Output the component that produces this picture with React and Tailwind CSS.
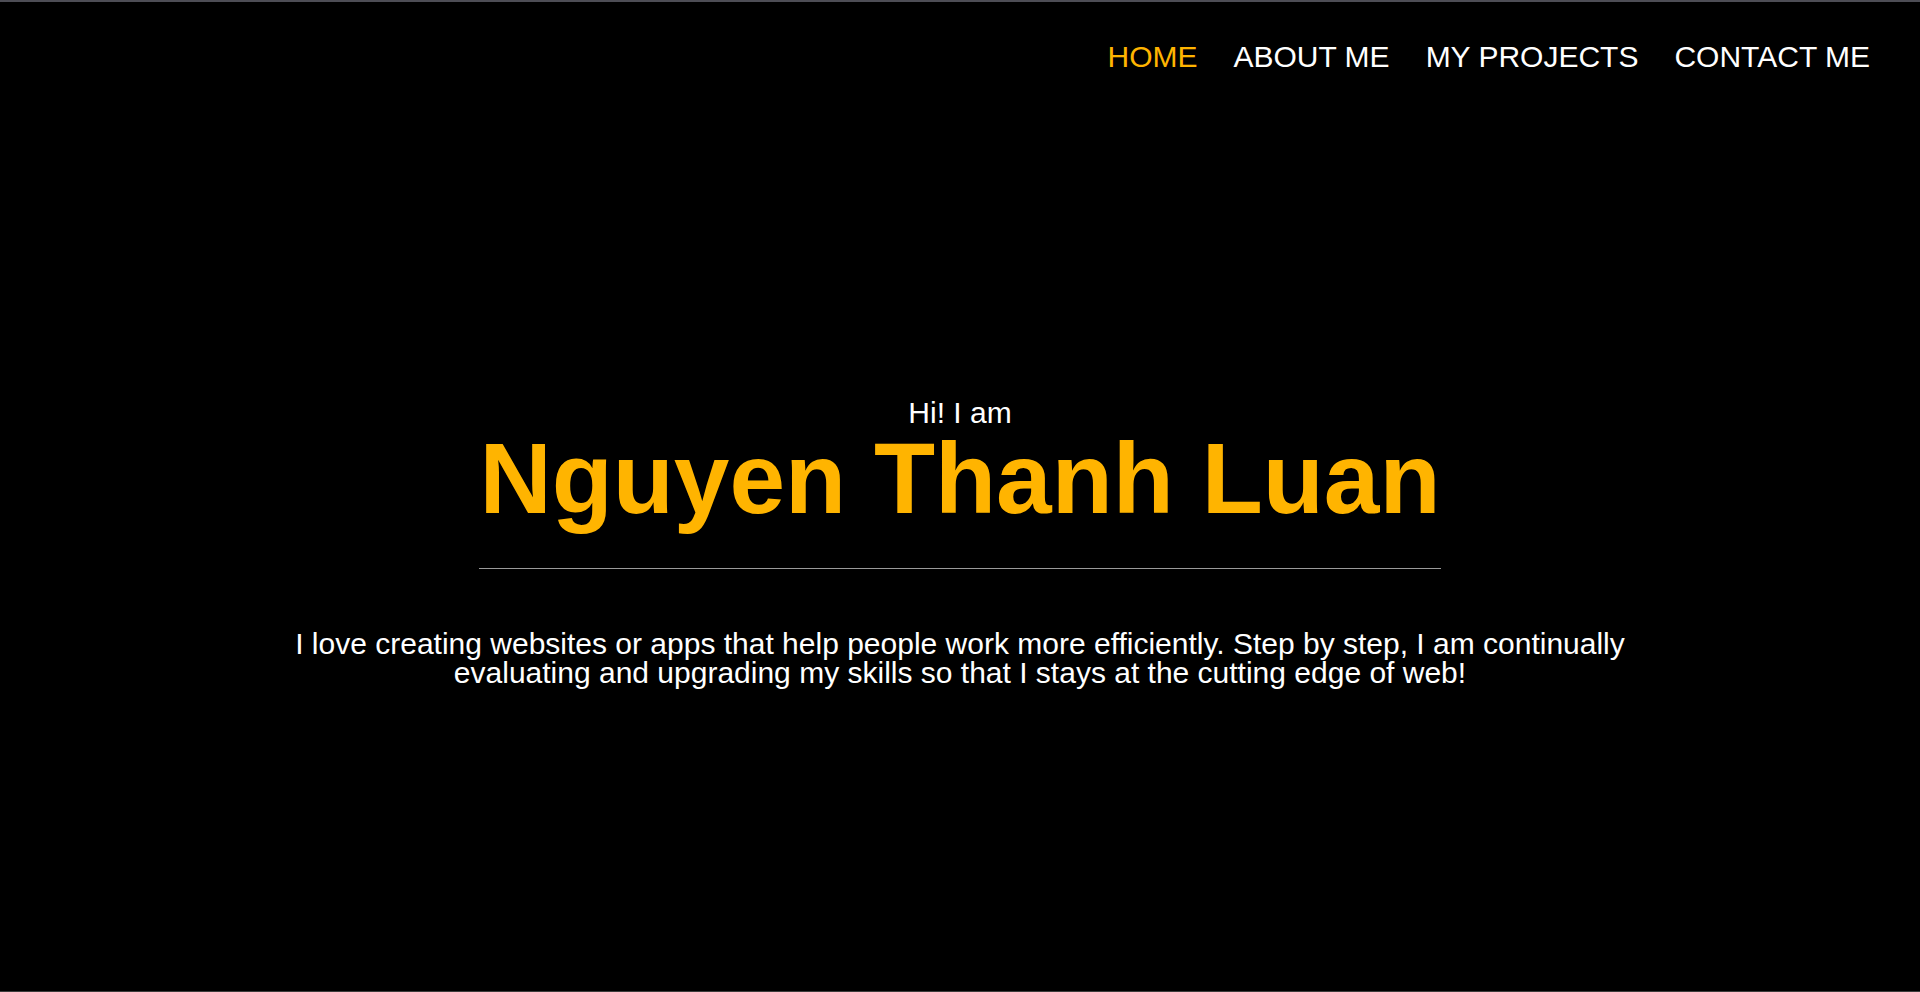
import React from 'react';

const links = ['HOME', 'ABOUT ME', 'MY PROJECTS', 'CONTACT ME'];

function NavBar() {
  return (
    <nav className="flex justify-end gap-[36px] pt-[38px] pr-[50px]">
      {links.map((label, i) => (
        <a
          key={label}
          href="#"
          className={`text-[30px] leading-[34.5px] ${i === 0 ? 'text-[#ffb400]' : 'text-white'}`}
        >
          {label}
        </a>
      ))}
    </nav>
  );
}

function Hero() {
  return (
    <section className="flex flex-col items-center mt-[323px]">
      <div className="inline-flex flex-col items-center">
        <p className="text-white text-[30px] leading-[30px]">Hi! I am</p>
        <h1 className="text-[#ffb400] text-[100px] leading-[100px] font-bold">Nguyen Thanh Luan</h1>
        <div className="w-full h-px bg-[#9a9a9a] mt-[40px]" />
      </div>
      <p className="max-w-[1400px] text-center text-white text-[30px] leading-[29px] mt-[60px]">
        I love creating websites or apps that help people work more efficiently. Step by step, I am continually
        evaluating and upgrading my skills so that I stays at the cutting edge of web!
      </p>
    </section>
  );
}

export default function App() {
  return (
    <div
      className="h-[992px] bg-black border-t-2 border-[#4d4d55] border-b border-b-[#3c3c3c] overflow-hidden"
      style={{ fontFamily: '"Liberation Sans", Arial, sans-serif' }}
    >
      <NavBar />
      <Hero />
    </div>
  );
}
